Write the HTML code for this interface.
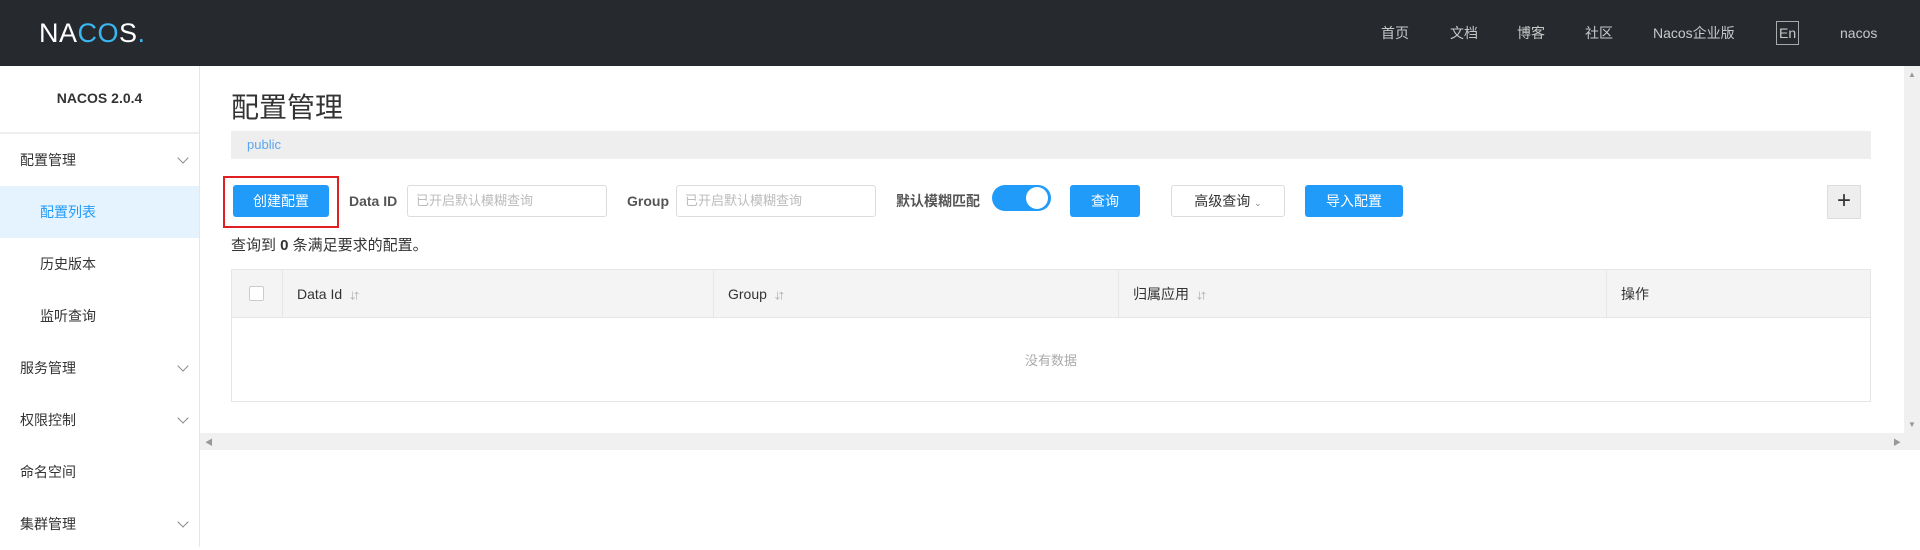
<!DOCTYPE html>
<html><head><meta charset="utf-8"><style>
*{box-sizing:border-box;margin:0;padding:0}
body{width:1920px;height:547px;overflow:hidden;background:#fff;font-family:"Liberation Sans","Noto Sans CJK SC",sans-serif;color:#333;position:relative}
.a{position:absolute}
.hdr{left:0;top:0;width:1920px;height:66px;background:#262a2f}
.nav{top:23px;font-size:14px;color:#c8c8c8;line-height:20px}
.side{left:0;top:66px;width:200px;height:481px;border-right:1px solid #e6e6e6}
.mi{left:0;width:199px;height:52px;line-height:52px;font-size:14px;color:#333}
.chev{position:absolute;right:12px;top:20px;width:8px;height:8px;border-right:1px solid #888;border-bottom:1px solid #888;transform:rotate(45deg)}
.btn{height:32px;line-height:32px;border-radius:3px;background:#209bfa;color:#fff;font-size:14px;text-align:center}
.inp{height:32px;border:1px solid #dcdcdc;border-radius:3px;font-size:13px;color:#bbb;line-height:30px;padding-left:8px}
.lbl{font-size:14px;font-weight:bold;color:#555;line-height:32px}
.th{top:270px;height:48px;line-height:48px;font-size:14px;color:#333;padding-left:14px;border-right:1px solid #e6e6e6}
.s{font-size:9px;color:#aaa;margin-left:8px}
</style></head><body>
<div class="a hdr"></div>
<div class="a" style="left:39px;top:18px;font-size:27px;color:#fff;font-weight:normal;letter-spacing:0.5px">NA<span style="color:#3ab6f0">CO</span>S<span style="color:#3ab6f0">.</span></div>
<div class="a nav" style="left:1381px">首页</div>
<div class="a nav" style="left:1450px">文档</div>
<div class="a nav" style="left:1517px">博客</div>
<div class="a nav" style="left:1585px">社区</div>
<div class="a nav" style="left:1653px">Nacos企业版</div>
<div class="a nav" style="left:1776px;top:21px;border:1px solid #aaa;padding:1px 2px;line-height:20px">En</div>
<div class="a nav" style="left:1840px">nacos</div>

<div class="a side"></div>
<div class="a" style="left:0;top:90px;width:199px;text-align:center;font-weight:bold;font-size:14px;color:#333">NACOS 2.0.4</div>
<div class="a" style="left:0;top:132px;width:199px;height:2px;background:#eee"></div>
<div class="a mi" style="top:134px;padding-left:20px">配置管理<i class="chev"></i></div>
<div class="a mi" style="top:186px;padding-left:40px;background:#e5f3ff;color:#209bfa">配置列表</div>
<div class="a mi" style="top:238px;padding-left:40px">历史版本</div>
<div class="a mi" style="top:290px;padding-left:40px">监听查询</div>
<div class="a mi" style="top:342px;padding-left:20px">服务管理<i class="chev"></i></div>
<div class="a mi" style="top:394px;padding-left:20px">权限控制<i class="chev"></i></div>
<div class="a mi" style="top:446px;padding-left:20px">命名空间</div>
<div class="a mi" style="top:498px;padding-left:20px">集群管理<i class="chev"></i></div>

<div class="a" style="left:231px;top:86px;font-size:28px;color:#333">配置管理</div>
<div class="a" style="left:231px;top:131px;width:1640px;height:28px;background:#eee;font-size:13px;color:#5aa6f0;line-height:28px;padding-left:16px">public</div>

<div class="a" style="left:223px;top:176px;width:116px;height:52px;border:2px solid #e02020"></div>
<div class="a btn" style="left:233px;top:185px;width:96px">创建配置</div>
<div class="a lbl" style="left:349px;top:185px">Data ID</div>
<div class="a inp" style="left:407px;top:185px;width:200px">已开启默认模糊查询</div>
<div class="a lbl" style="left:627px;top:185px">Group</div>
<div class="a inp" style="left:676px;top:185px;width:200px">已开启默认模糊查询</div>
<div class="a lbl" style="left:896px;top:185px">默认模糊匹配</div>
<div class="a" style="left:992px;top:185px;width:59px;height:26px;border-radius:13px;background:#209bfa"><div class="a" style="right:3px;top:2px;width:22px;height:22px;border-radius:50%;background:#fff"></div></div>
<div class="a btn" style="left:1070px;top:185px;width:70px">查询</div>
<div class="a btn" style="left:1171px;top:185px;width:114px;background:#fff;color:#333;border:1px solid #dcdcdc;line-height:30px">高级查询 <span style="font-size:9px;color:#888">⌄</span></div>
<div class="a btn" style="left:1305px;top:185px;width:98px">导入配置</div>
<div class="a" style="left:1827px;top:185px;width:34px;height:34px;background:#eee;border:1px solid #ddd;text-align:center;line-height:30px;font-size:24px;color:#333">+</div>

<div class="a" style="left:231px;top:234px;font-size:15px;color:#333">查询到 <b>0</b> 条满足要求的配置。</div>

<div class="a" style="left:231px;top:269px;width:1640px;height:133px;border:1px solid #e6e6e6"></div>
<div class="a" style="left:232px;top:270px;width:1638px;height:48px;background:#f4f4f4;border-bottom:1px solid #e6e6e6"></div>
<div class="a th" style="left:232px;width:51px"><div style="position:absolute;left:17px;top:16px;width:15px;height:15px;border:1px solid #ccc;background:#fff;border-radius:2px"></div></div>
<div class="a th" style="left:283px;width:431px">Data Id<span class="s">⇵</span></div>
<div class="a th" style="left:714px;width:405px">Group<span class="s">⇵</span></div>
<div class="a th" style="left:1119px;width:488px">归属应用<span class="s">⇵</span></div>
<div class="a th" style="left:1607px;width:263px;border:none">操作</div>
<div class="a" style="left:231px;top:350px;width:1640px;text-align:center;font-size:13px;color:#aaa">没有数据</div>

<div class="a" style="left:200px;top:433px;width:1704px;height:17px;background:#f0f0f0"></div>
<div class="a" style="left:205px;top:437px;font-size:8px;color:#999">◀</div>
<div class="a" style="left:1893px;top:437px;font-size:8px;color:#999">▶</div>
<div class="a" style="left:1904px;top:66px;width:16px;height:384px;background:#f0f0f0"></div>
<div class="a" style="left:1908px;top:70px;font-size:8px;color:#999">▲</div>
<div class="a" style="left:1908px;top:420px;font-size:8px;color:#999">▼</div>
</body></html>
